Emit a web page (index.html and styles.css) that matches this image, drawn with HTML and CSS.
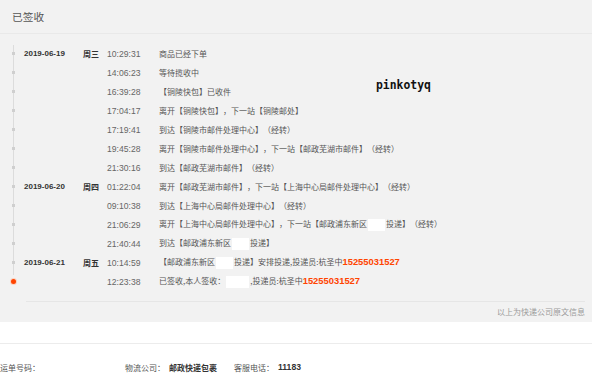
FILE: index.html
```html
<!DOCTYPE html>
<html lang="zh-CN">
<head>
<meta charset="utf-8">
<link rel="stylesheet" href="styles.css">
</head>
<body>
<div class="panel">
  <div class="head">已签收</div>
  <div class="list">
    <div class="row"><span class="date">2019-06-19</span><span class="week">周三</span><span class="time">10:29:31</span><span class="txt">商品已经下单</span></div>
    <div class="row"><span class="date"></span><span class="week"></span><span class="time">14:06:23</span><span class="txt">等待揽收中</span></div>
    <div class="row"><span class="date"></span><span class="week"></span><span class="time">16:39:28</span><span class="txt">【铜陵快包】已收件</span></div>
    <div class="row"><span class="date"></span><span class="week"></span><span class="time">17:04:17</span><span class="txt">离开【铜陵快包】，下一站【铜陵邮处】</span></div>
    <div class="row"><span class="date"></span><span class="week"></span><span class="time">17:19:41</span><span class="txt">到达【铜陵市邮件处理中心】（经转）</span></div>
    <div class="row"><span class="date"></span><span class="week"></span><span class="time">19:45:28</span><span class="txt">离开【铜陵市邮件处理中心】，下一站【邮政芜湖市邮件】（经转）</span></div>
    <div class="row"><span class="date"></span><span class="week"></span><span class="time">21:30:16</span><span class="txt">到达【邮政芜湖市邮件】（经转）</span></div>
    <div class="row"><span class="date">2019-06-20</span><span class="week">周四</span><span class="time">01:22:04</span><span class="txt">离开【邮政芜湖市邮件】，下一站【上海中心局邮件处理中心】（经转）</span></div>
    <div class="row"><span class="date"></span><span class="week"></span><span class="time">09:10:38</span><span class="txt">到达【上海中心局邮件处理中心】（经转）</span></div>
    <div class="row"><span class="date"></span><span class="week"></span><span class="time">21:06:29</span><span class="txt">离开【上海中心局邮件处理中心】，下一站【邮政浦东新区<span class="mask"></span>投递】（经转）</span></div>
    <div class="row"><span class="date"></span><span class="week"></span><span class="time">21:40:44</span><span class="txt">到达【邮政浦东新区<span class="mask"></span>投递】</span></div>
    <div class="row"><span class="date">2019-06-21</span><span class="week">周五</span><span class="time">10:14:59</span><span class="txt">【邮政浦东新区<span class="mask"></span>投递】安排投递,投递员:杭圣中<b class="phone">15255031527</b></span></div>
    <div class="row last"><span class="date"></span><span class="week"></span><span class="time">12:23:38</span><span class="txt">已签收,本人签收：<span class="mask wide"></span>,投递员:杭圣中<b class="phone">15255031527</b></span></div>
  </div>
  <div class="note">以上为快递公司原文信息</div>
  <div class="watermark">pinkotyq</div>
</div>
<div class="divider"></div>
<div class="info">
  <span class="label">运单号码：</span>
  <span class="label co">物流公司：</span><b class="val">邮政快递包裹</b>
  <span class="label tel">客服电话：</span><b class="val num">11183</b>
</div>
</body>
</html>
```
FILE: styles.css
```css
* { box-sizing: border-box; }
body {
  margin: 0;
  background: #fff;
  font-family: "Noto Sans CJK SC", "Liberation Sans", sans-serif;
  color: #555;
  text-spacing-trim: space-all;
}
.panel {
  position: relative;
  width: 592px;
  background: #f2f2f2;
  padding-bottom: 1px;
}
.head {
  height: 34px;
  line-height: 34px;
  padding-left: 12px;
  font-size: 10.7px;
  color: #555;
  border-bottom: 1px solid #e9e9e9;
}
.list {
  padding-top: 10px;
}
.row {
  position: relative;
  display: grid;
  grid-template-columns: 24px 59px 24px 52px 1fr;
  height: 19px;
  align-items: center;
  font-size: 8px;
  white-space: nowrap;
}
.row::before {
  content: "";
  position: absolute;
  left: 13px;
  top: 0;
  bottom: 0;
  width: 1px;
  background: #dcdcdc;
}
.row::after {
  content: "";
  position: absolute;
  left: 12px;
  top: 8px;
  width: 3px;
  height: 3px;
  background: #cfcfcf;
}
.row:first-child::before { top: 1px; }
.row.last::before { bottom: 16px; }
.row.last::after {
  left: 11px;
  top: 7px;
  width: 5px;
  height: 5px;
  border-radius: 50%;
  background: #ff4400;
  box-shadow: 0 0 0 1px #fbd3c2;
}
.date {
  grid-column: 2;
  font-family: "Liberation Sans", sans-serif;
  font-weight: bold;
  font-size: 8px;
  color: #333;
}
.week {
  grid-column: 3;
  font-weight: bold;
  font-size: 8px;
  color: #333;
}
.time {
  grid-column: 4;
  font-family: "Liberation Sans", sans-serif;
  font-size: 8.6px;
  color: #666;
}
.txt {
  grid-column: 5;
  font-size: 8px;
  color: #555;
  text-spacing-trim: space-all;
}
.mask {
  display: inline-block;
  width: 17px;
  height: 12px;
  background: #fff;
  vertical-align: middle;
  margin: 0 1px;
}
.mask.wide { width: 23px; }
.phone {
  font-family: "Liberation Sans", sans-serif;
  font-weight: bold;
  font-size: 9.4px;
  color: #ff4400;
}
.note {
  margin: 10px 7px 0 26px;
  border-top: 1px solid #e6e6e6;
  height: 20px;
  line-height: 19px;
  text-align: right;
  font-size: 8px;
  color: #9a9a9a;
}
.watermark {
  position: absolute;
  left: 376px;
  top: 78px;
  font-family: "DejaVu Sans Mono", monospace;
  font-weight: bold;
  font-size: 11.4px;
  color: #111;
}
.divider {
  width: 592px;
  height: 22px;
  border-bottom: 1px solid #ececec;
}
.info {
  display: flex;
  align-items: center;
  height: 20px;
  margin-top: 13px;
  font-size: 8px;
  color: #555;
}
.label.co { margin-left: 85px; }
.label.tel { margin-left: 17px; }
.val {
  margin-left: 4px;
  font-weight: bold;
  color: #333;
}
.val.num {
  font-family: "Liberation Sans", sans-serif;
  font-size: 8.6px;
}
```
